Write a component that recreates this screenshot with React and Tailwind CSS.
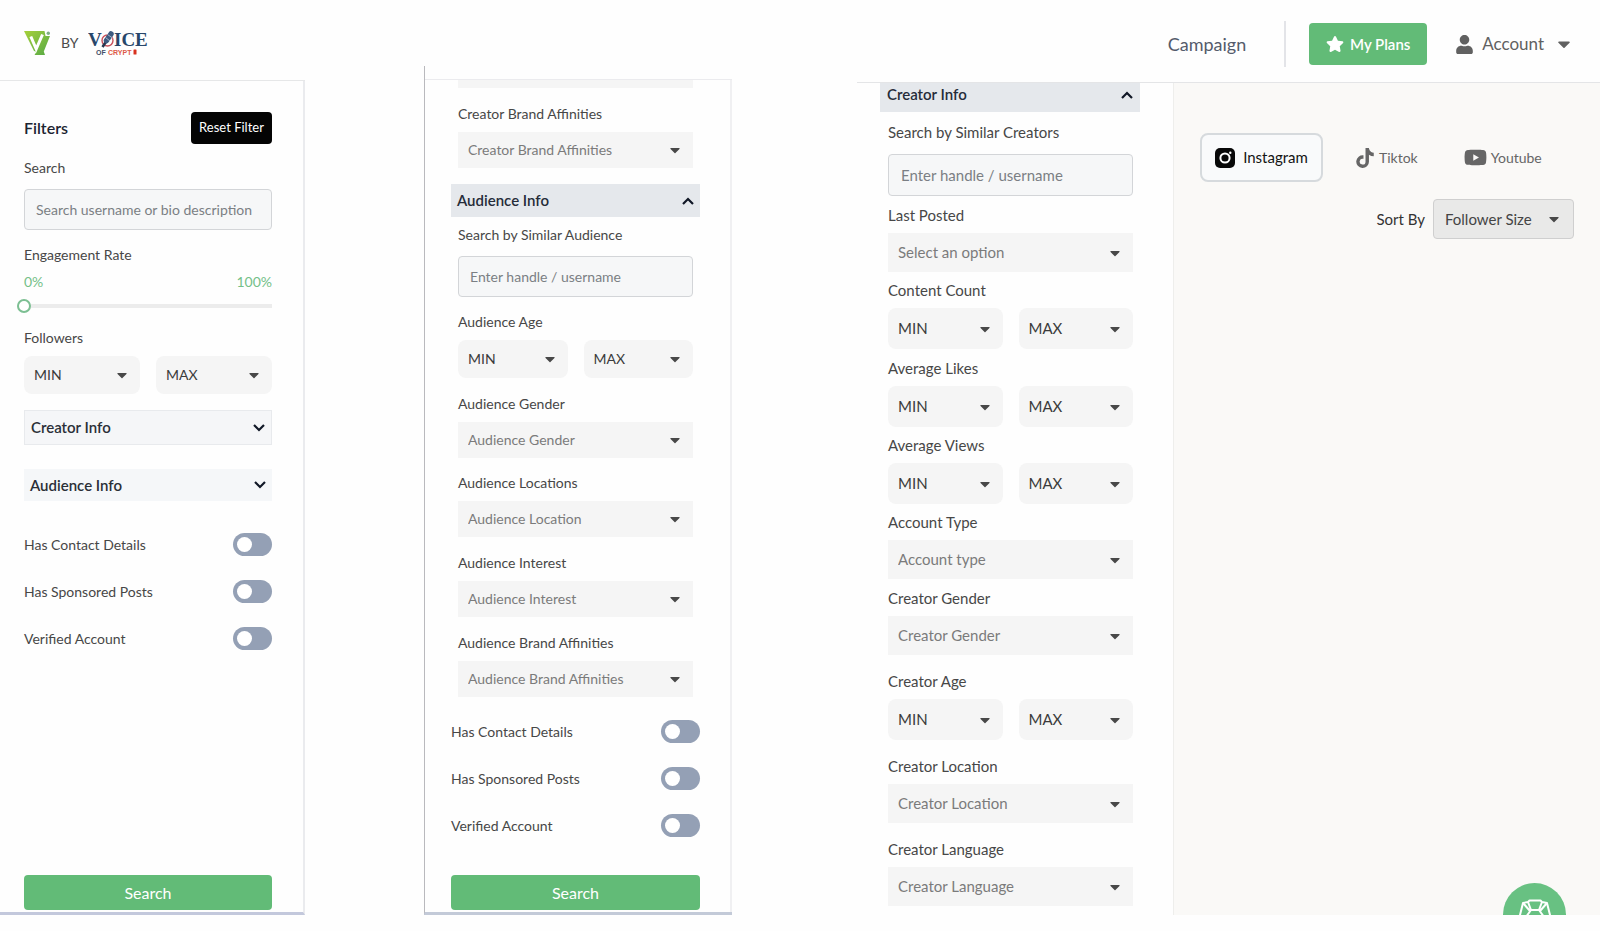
import React, { useId } from "react";
import { FaCaretDown, FaStar, FaTiktok, FaUser, FaYoutube } from "react-icons/fa";

function Chevron({ up }) {
  return (
    <svg viewBox="0 0 12 8" className="h-2 w-3" fill="none" stroke="#111827" strokeWidth="2.2">
      <path d={up ? "M1 7 6 2l5 5" : "M1 1l5 5 5-5"} />
    </svg>
  );
}

function VMark() {
  return (
    <svg viewBox="0 0 27 25" className="h-[25px] w-[27px]">
      <defs>
        <linearGradient id="leaf" x1="0" y1="0" x2="1" y2="1">
          <stop offset="0" stopColor="#a6d03a" />
          <stop offset="1" stopColor="#55a846" />
        </linearGradient>
      </defs>
      <path d="M0 0h20.500l1 5h4.500L19.800 20.500l1.200 3.500H10.500l2-3.200-2.500-.8z" fill="url(#leaf)" />
      <path d="M6.800 5.500l5.400 12.500L18.500 3.500" fill="none" stroke="#fff" strokeWidth="3" />
      <circle cx="24.300" cy="2.200" r="1.700" fill="#7fae86" />
    </svg>
  );
}

function VoiceLogo() {
  return (
    <svg viewBox="0 0 60 26" className="h-[26px] w-[60px]" role="img" aria-label="Voice of Crypto">
      <g fontFamily="'Liberation Serif', serif" fontWeight="700" fontSize="19" fill="#27466a">
        <text x="0" y="16">V</text>
        <text x="26" y="16">ICE</text>
      </g>
      <ellipse cx="19.500" cy="10.500" rx="5.500" ry="5.500" fill="none" stroke="#c9505a" strokeWidth="1.400" />
      <path d="M14.500 17 22 6" stroke="#27364f" strokeWidth="2.600" />
      <path d="M18.500 10.500l4.500-6.500" stroke="#3d5a80" strokeWidth="5.500" strokeLinecap="round" />
      <path d="M19.500 4.500l5 3.500M17.500 7.500l4.500 3.500" stroke="#cfd8e6" strokeWidth=".7" />
      <g fontFamily="'Liberation Sans', sans-serif" fontSize="7" fontWeight="700">
        <text x="8" y="24.500" fill="#44506a">OF</text>
        <text x="20" y="24.500" fill="#dd5a48">CRYPT</text>
      </g>
      <rect x="45.500" y="19.500" width="3" height="5" rx=".6" fill="#d8321f" />
    </svg>
  );
}

function Label({ htmlFor, big, className = "", children }) {
  return (
    <label
      htmlFor={htmlFor}
      className={`block leading-5 text-[#474747] ${big ? "text-[15px]" : "text-sm"} ${className}`}
    >
      {children}
    </label>
  );
}

function Select({ id, label, value, tone = "box", big }) {
  const look = {
    box: `text-[#7b7b7b] ${big ? "h-[39px]" : "h-9"}`,
    pill: `rounded-lg text-[#3b3b3b] ${big ? "h-[41px]" : "h-[38px]"}`,
  };
  return (
    <div className="relative min-w-0 flex-1">
      <select
        id={id}
        aria-label={label}
        className={`block w-full appearance-none bg-[#f5f5f5] pr-7 pl-2.5 ${big ? "text-[15px]" : "text-sm"} ${look[tone]}`}
      >
        <option>{value}</option>
      </select>
      <FaCaretDown className="pointer-events-none absolute top-1/2 right-2.5 size-4 -translate-y-1/2 text-[#484848]" />
    </div>
  );
}

function SelectField({ label, value, big, className }) {
  const id = useId();
  return (
    <div className={className}>
      <Label htmlFor={id} big={big}>{label}</Label>
      <div className="mt-2 flex">
        <Select id={id} value={value} big={big} />
      </div>
    </div>
  );
}

function RangeField({ label, big, className }) {
  return (
    <fieldset className={className}>
      <legend className={`block leading-5 text-[#474747] ${big ? "text-[15px]" : "text-sm"}`}>{label}</legend>
      <div className="mt-2 flex gap-4">
        <Select tone="pill" label={`${label} minimum`} value="MIN" big={big} />
        <Select tone="pill" label={`${label} maximum`} value="MAX" big={big} />
      </div>
    </fieldset>
  );
}

function TextField({ label, placeholder, big, className = "" }) {
  const id = useId();
  return (
    <div className={className}>
      <Label htmlFor={id} big={big}>{label}</Label>
      <input
        id={id}
        type="text"
        placeholder={placeholder}
        className={`block w-full rounded border border-[#d3d5d8] bg-[#f6f7f8] placeholder:text-[#7b7f84] ${big ? "mt-3 h-[42px] px-3 text-[15px]" : "mt-[11px] h-[41px] px-[11px] text-sm"}`}
      />
    </div>
  );
}

function Toggles() {
  return ["Has Contact Details", "Has Sponsored Posts", "Verified Account"].map((name) => (
    <label key={name} className="flex items-center justify-between text-sm leading-5 text-[#474747]">
      {name}
      <input
        type="checkbox"
        role="switch"
        className="h-[23px] w-[39px] appearance-none rounded-full bg-[#94a0b5] before:mt-[4px] before:ml-[4px] before:block before:size-[15px] before:rounded-full before:bg-white checked:bg-[#62bb77] checked:before:ml-5"
      />
    </label>
  ));
}

function SearchButton() {
  return (
    <button type="button" className="mt-auto mb-0.5 h-[35px] w-full shrink-0 rounded bg-[#62bb77] text-base text-white">
      Search
    </button>
  );
}

function FiltersColumn() {
  const rate = useId();
  return (
    <section className="flex w-[305px] shrink-0 flex-col">
      <header className="flex h-[81px] items-center gap-2.5 border-b border-[#e6e7e8] pt-1.5 pl-6">
        <VMark />
        <span className="text-sm text-[#4b4b4b]">BY</span>
        <VoiceLogo />
      </header>
      <div className="flex flex-1 flex-col border-r-2 border-b-[3px] border-r-[#eaebee] border-b-[#c3c8dc] pt-[31px] pr-[31px] pl-6">
        <div className="flex items-center justify-between">
          <h2 className="text-base font-semibold text-[#1c2431]">Filters</h2>
          <button type="button" className="h-8 w-[81px] rounded bg-[#040404] text-[13px] text-white">Reset Filter</button>
        </div>
        <TextField className="mt-3.5" label="Search" placeholder="Search username or bio description" />
        <Label htmlFor={rate} className="mt-[15px]">Engagement Rate</Label>
        <div className="mt-[7px] flex justify-between text-sm leading-5 text-[#74c088]">
          <span>0%</span>
          <span>100%</span>
        </div>
        <input
          id={rate}
          type="range"
          min="0"
          max="100"
          defaultValue="0"
          className="mt-[7px] -ml-[7px] block h-3.5 w-[calc(100%+7px)] appearance-none bg-transparent [&::-webkit-slider-runnable-track]:h-1 [&::-webkit-slider-runnable-track]:bg-[#ececec] [&::-webkit-slider-thumb]:-mt-[5px] [&::-webkit-slider-thumb]:size-3.5 [&::-webkit-slider-thumb]:appearance-none [&::-webkit-slider-thumb]:rounded-full [&::-webkit-slider-thumb]:border-2 [&::-webkit-slider-thumb]:border-[#7cbf92] [&::-webkit-slider-thumb]:bg-white"
        />
        <RangeField className="mt-[15px]" label="Followers" />
        <button type="button" className="mt-4 flex h-[35px] items-center justify-between border border-[#e8eaed] bg-[#f5f6f8] px-1.5 text-[15px] font-semibold text-[#2a2f37]">
          Creator Info <Chevron />
        </button>
        <button type="button" className="mt-6 flex h-8 items-center justify-between bg-[#f5f7f9] px-1.5 text-[15px] font-semibold text-[#2a2f37]">
          Audience Info <Chevron />
        </button>
        <div className="mt-8 mb-8 flex flex-col gap-6">
          <Toggles />
        </div>
        <SearchButton />
      </div>
    </section>
  );
}

function AudienceColumn() {
  return (
    <section className="ml-[119px] flex w-[308px] shrink-0 flex-col pt-[66px]">
      <div className="flex flex-1 flex-col border-b-[3px] border-l border-b-[#c3cad8] border-l-[#b9b9bd]">
        <div className="h-3.5 border-b border-[#ebebee]" />
        <div className="flex flex-1 flex-col border-r-2 border-[#f0f0f2] pr-[30px] pl-[26px]">
          <div className="mx-[7px] h-2 shrink-0 bg-[#f5f5f5]" />
          <SelectField className="mx-[7px] mt-4" label="Creator Brand Affinities" value="Creator Brand Affinities" />
          <button type="button" className="mt-4 flex h-[33px] shrink-0 items-center justify-between bg-[#e5e8ec] px-1.5 text-[15px] font-semibold text-[#252c39]">
            Audience Info <Chevron up />
          </button>
          <div className="mx-[7px] mt-2">
            <TextField label="Search by Similar Audience" placeholder="Enter handle / username" />
            <RangeField className="mt-[15px]" label="Audience Age" />
            <SelectField className="mt-4" label="Audience Gender" value="Audience Gender" />
            <SelectField className="mt-[15px]" label="Audience Locations" value="Audience Location" />
            <SelectField className="mt-4" label="Audience Interest" value="Audience Interest" />
            <SelectField className="mt-4" label="Audience Brand Affinities" value="Audience Brand Affinities" />
          </div>
          <div className="mt-[23px] mb-8 flex flex-col gap-6">
            <Toggles />
          </div>
          <SearchButton />
        </div>
      </div>
    </section>
  );
}

function TopBar() {
  return (
    <header className="flex h-[83px] shrink-0 items-center justify-end border-b border-[#e4e5e7] pt-1.5 pr-[26px]">
      <a href="#campaign" className="text-lg text-[#545b6b]">Campaign</a>
      <div className="ml-[38px] h-[46px] w-0.5 bg-[#e3e4e8]" />
      <button type="button" className="ml-[23px] flex h-[42px] w-[118px] items-center justify-center gap-1.5 rounded bg-[#62bb77] text-[15px] font-semibold text-white">
        <FaStar className="size-[18px]" />
        My Plans
      </button>
      <button type="button" className="ml-7 flex items-center text-[17px] text-[#616161]">
        <FaUser className="mr-2 size-[19px]" />
        Account
        <FaCaretDown className="ml-2.5 size-5" />
      </button>
    </header>
  );
}

function CreatorPanel() {
  return (
    <div className="flex w-[317px] shrink-0 flex-col border-r border-[#eeeeec] pr-[33px] pl-[23px]">
      <button type="button" className="flex h-[29px] items-center justify-between bg-[#e5e8ec] px-[7px] pb-1.5 text-[15px] font-semibold text-[#252c39]">
        Creator Info <Chevron up />
      </button>
      <div className="mr-[7px] ml-2 mt-2.5">
        <TextField big label="Search by Similar Creators" placeholder="Enter handle / username" />
        <SelectField big className="mt-[9px]" label="Last Posted" value="Select an option" />
        <RangeField big className="mt-2" label="Content Count" />
        <RangeField big className="mt-[9px]" label="Average Likes" />
        <RangeField big className="mt-2" label="Average Views" />
        <SelectField big className="mt-2" label="Account Type" value="Account type" />
        <SelectField big className="mt-[9px]" label="Creator Gender" value="Creator Gender" />
        <RangeField big className="mt-4" label="Creator Age" />
        <SelectField big className="mt-4" label="Creator Location" value="Creator Location" />
        <SelectField big className="mt-4" label="Creator Language" value="Creator Language" />
      </div>
    </div>
  );
}

function InstagramIcon() {
  return (
    <svg viewBox="0 0 20 20" className="size-5">
      <rect width="20" height="20" rx="5" fill="#080808" />
      <circle cx="10" cy="10" r="4.600" fill="none" stroke="#fff" strokeWidth="2" />
      <circle cx="15.300" cy="4.800" r="1.200" fill="#fff" />
    </svg>
  );
}

function HelpIcon() {
  return (
    <svg viewBox="0 0 32 32" className="size-8" fill="none" stroke="#fff" strokeWidth="2" strokeLinejoin="round">
      <path d="M10.500 1.500h11l1.500 1.500 5 1 1.500 6 1.500 6-1.500 7-6 6h-15l-6-6L1 16l1.500-6L4 4l5-1z" />
      <path d="M12 11h8l4 5.500-4 6h-8l-4-6z" />
      <path d="M9 3l3 8M4 4l7 8M23 3l-3 8M28 4l-7 8" />
    </svg>
  );
}

function Results() {
  const sort = useId();
  return (
    <main className="relative min-w-0 flex-1 overflow-hidden bg-[#faf9f7] px-[26px] pt-[50px]">
      <div className="flex items-center text-sm text-[#666]">
        <button type="button" className="flex h-[49px] w-[123px] items-center justify-center gap-2 rounded-lg border-2 border-[#d6dadd] bg-[#f9fafb] text-[15px] text-[#141414]">
          <InstagramIcon />
          Instagram
        </button>
        <button type="button" className="ml-8 flex items-center gap-1">
          <FaTiktok className="size-5" />
          Tiktok
        </button>
        <button type="button" className="ml-[46px] flex items-center gap-1">
          <FaYoutube className="size-[23px]" />
          Youtube
        </button>
      </div>
      <div className="mt-[17px] flex items-center justify-end gap-2">
        <label htmlFor={sort} className="text-[15px] text-[#333]">Sort By</label>
        <div className="relative">
          <select id={sort} className="block h-10 w-[141px] appearance-none rounded border border-[#cfcfcf] bg-[#e9e9e8] pl-[11px] text-[15px] text-[#444]">
            <option>Follower Size</option>
          </select>
          <FaCaretDown className="pointer-events-none absolute top-1/2 right-3 size-4 -translate-y-1/2 text-[#484848]" />
        </div>
      </div>
      <button type="button" aria-label="Help" className="absolute right-[34px] -bottom-[31px] flex size-[63px] items-center justify-center rounded-full bg-[#68c182]">
        <HelpIcon />
      </button>
    </main>
  );
}

export default function App() {
  return (
    <div className="flex min-h-screen bg-[#fefefe] pb-4 font-['Lato',sans-serif]">
      <FiltersColumn />
      <AudienceColumn />
      <section className="ml-[125px] flex min-w-0 flex-1 flex-col">
        <TopBar />
        <div className="flex flex-1">
          <CreatorPanel />
          <Results />
        </div>
      </section>
    </div>
  );
}
